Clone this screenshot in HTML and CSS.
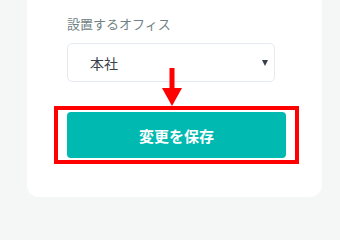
FILE: index.html
```html
<!DOCTYPE html>
<html lang="ja">
<head>
<meta charset="utf-8">
<link rel="stylesheet" href="styles.css">
</head>
<body>
<div class="card">
  <div class="label">設置するオフィス</div>
  <div class="select">
    <span class="select-value">本社</span>
    <span class="caret"></span>
  </div>
  <div class="save-wrap">
    <button class="save">変更を保存</button>
    <div class="highlight"></div>
    <svg class="pointer" width="20" height="38" viewBox="0 0 20 38">
      <rect x="7.5" y="0" width="5" height="21" fill="#ff0000"/>
      <polygon points="0,20 20,20 10,38" fill="#ff0000"/>
    </svg>
  </div>
</div>
</body>
</html>
```
FILE: styles.css
```css
html, body {
  margin: 0;
  padding: 0;
}
body {
  background: #f5f7f7;
  font-family: "Noto Sans CJK JP", "Noto Sans", sans-serif;
  width: 340px;
  height: 203px;
  overflow: hidden;
}
.card {
  margin-left: 27px;
  width: 295px;
  height: 197px;
  box-sizing: border-box;
  background: #ffffff;
  border-radius: 0 0 12px 12px;
  padding: 14px 0 0 40px;
}
.label {
  font-size: 13px;
  line-height: 20px;
  color: #6f7f84;
  margin-bottom: 9px;
}
.select {
  width: 208px;
  height: 39px;
  box-sizing: border-box;
  border: 1px solid #e5eaf0;
  border-radius: 5px;
  display: flex;
  align-items: center;
  padding: 0 6px 0 22px;
}
.select-value {
  font-size: 14px;
  color: #3b3f4d;
  line-height: 20px;
}
.caret {
  margin-left: auto;
  width: 0;
  height: 0;
  border-left: 3px solid transparent;
  border-right: 3px solid transparent;
  border-top: 6px solid #3a3f4d;
}
.save-wrap {
  position: relative;
  margin-top: 30px;
  width: 219px;
  height: 46px;
}
.save {
  display: block;
  width: 219px;
  height: 46px;
  border: none;
  border-radius: 4px;
  background: #00b9b1;
  color: #ffffff;
  font-family: "Noto Sans CJK JP", "Noto Sans", sans-serif;
  font-size: 15px;
  font-weight: 700;
  padding: 0;
}
.highlight {
  position: absolute;
  left: -13px;
  top: -6px;
  width: 245px;
  height: 58px;
  box-sizing: border-box;
  border: 4px solid #ff0000;
}
.pointer {
  position: absolute;
  left: 95px;
  top: -44px;
}
```
